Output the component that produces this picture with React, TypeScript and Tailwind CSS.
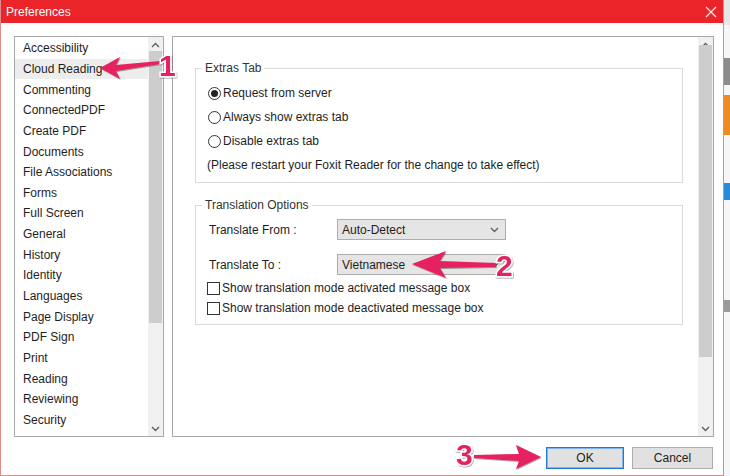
import React from 'react';

const categories = [
  'Accessibility',
  'Cloud Reading',
  'Commenting',
  'ConnectedPDF',
  'Create PDF',
  'Documents',
  'File Associations',
  'Forms',
  'Full Screen',
  'General',
  'History',
  'Identity',
  'Languages',
  'Page Display',
  'PDF Sign',
  'Print',
  'Reading',
  'Reviewing',
  'Security',
];

const PINK = '#e5245f';

function Chevron({ up }: { up?: boolean }) {
  return (
    <svg width="9" height="6" viewBox="0 0 9 6" className="text-[#606060]">
      <path
        d={up ? 'M1 5 L4.5 1.5 L8 5' : 'M1 1 L4.5 4.5 L8 1'}
        fill="none"
        stroke="currentColor"
        strokeWidth="1.4"
      />
    </svg>
  );
}

// vertical scrollbar, thumb sized by flex ratio
function ScrollBar({ thumb, rest }: { thumb: string; rest: string }) {
  return (
    <div className="w-[15px] bg-[#f0f0f0] flex flex-col">
      <div className="h-[15px] flex items-center justify-center">
        <Chevron up />
      </div>
      <div className={`${thumb} bg-[#cdcdcd] mx-[1px]`} />
      <div className={rest} />
      <div className="h-[15px] flex items-center justify-center">
        <Chevron />
      </div>
    </div>
  );
}

function Radio({ checked, label }: { checked?: boolean; label: string }) {
  return (
    <div className="h-[24px] flex items-center gap-[2px]">
      <span className="w-[13px] h-[13px] rounded-full border border-[#333] bg-white flex items-center justify-center">
        {checked && <span className="w-[7px] h-[7px] rounded-full bg-[#222]" />}
      </span>
      <span>{label}</span>
    </div>
  );
}

function Check({ label }: { label: string }) {
  return (
    <div className="h-[20px] flex items-center gap-[2px]">
      <span className="w-[13px] h-[13px] border border-[#333] bg-white" />
      <span>{label}</span>
    </div>
  );
}

function Select({ value }: { value: string }) {
  return (
    <div className="w-[169px] h-[21px] bg-[#e5e5e5] border border-[#adadad] flex items-center justify-between pl-[4px] pr-[6px]">
      <span>{value}</span>
      <Chevron />
    </div>
  );
}

function Annotations() {
  const num = {
    fontFamily: '"Liberation Sans", Arial, sans-serif',
    fontWeight: 700,
    fontSize: 30,
  } as const;
  return (
    <svg className="absolute inset-0 pointer-events-none" width="730" height="476">
      <defs>
        <filter id="sh" x="-20%" y="-20%" width="140%" height="140%">
          <feDropShadow dx="0.6" dy="0.8" stdDeviation="0.7" floodColor="#000" floodOpacity="0.45" />
        </filter>
      </defs>
      <g fill={PINK} filter="url(#sh)">
        <polygon points="100,68 120,57 116,65 160,61 160,64 116,71 120,79" />
        <polygon points="412,264 446,251 440,261 496,263 496,267 440,268 446,278" />
        <polygon points="541,457 516,445 519,454 474,455 474,458 519,461 516,469" />
      </g>
      <g fill={PINK} stroke="#fff" strokeWidth="3" paintOrder="stroke" style={num} filter="url(#sh)">
        <text x="159" y="76">1</text>
        <text x="496" y="276">2</text>
        <text x="456" y="465">3</text>
      </g>
    </svg>
  );
}

export default function App() {
  return (
    <div
      className="relative w-[730px] h-[476px] overflow-hidden flex bg-white text-[12px] text-[#1e1e1e]"
      style={{ fontFamily: '"Liberation Sans", Arial, sans-serif' }}
    >
      {/* dialog window */}
      <div className="w-[724px] h-[476px] flex flex-col border-x border-b border-[#e08a8a] bg-white">
        <div className="h-[23px] bg-[#ea2428] flex items-center justify-between pl-[5px] pr-[6px] text-white">
          <span>Preferences</span>
          <svg width="12" height="12" viewBox="0 0 12 12">
            <path d="M1 1 L11 11 M11 1 L1 11" stroke="#fde3e3" strokeWidth="1.3" />
          </svg>
        </div>

        <div className="flex gap-[8px] pl-[13px] pr-[9px] pt-[13px]">
          {/* category list */}
          <div className="w-[150px] h-[401px] border border-[#a8a8a8] flex">
            <div className="flex-1 flex flex-col pt-px">
              {categories.map((c) => (
                <div
                  key={c}
                  className={`h-[20.65px] flex items-center pl-[8px] ${c === 'Cloud Reading' ? 'bg-[#ededed]' : ''}`}
                >
                  {c}
                </div>
              ))}
            </div>
            <ScrollBar thumb="h-[272px] mt-[-1px]" rest="flex-1" />
          </div>

          {/* settings panel */}
          <div className="flex-1 h-[401px] border border-[#a8a8a8] flex">
            <div className="flex-1 pl-[22px] pr-[15px] pt-[24px]">
              <fieldset className="border border-[#dadada] pl-[12px] pb-[5px] pt-[6px]">
                <legend className="px-[3px] ml-[-6px] leading-[14px] text-[#333]">Extras Tab</legend>
                <Radio checked label="Request from server" />
                <Radio label="Always show extras tab" />
                <Radio label="Disable extras tab" />
                <div className="h-[24px] flex items-center -ml-px">
                  (Please restart your Foxit Reader for the change to take effect)
                </div>
              </fieldset>

              <fieldset className="mt-[15px] border border-[#dadada] pl-[12px] pb-[6px] pt-[7px]">
                <legend className="px-[3px] ml-[-6px] leading-[14px] text-[#333]">Translation Options</legend>
                <div className="flex items-center">
                  <span className="w-[129px] pl-px">Translate From :</span>
                  <Select value="Auto-Detect" />
                </div>
                <div className="flex items-center mt-[14px]">
                  <span className="w-[129px] pl-px">Translate To :</span>
                  <Select value="Vietnamese" />
                </div>
                <div className="mt-[3px] -ml-px">
                  <Check label="Show translation mode activated message box" />
                  <Check label="Show translation mode deactivated message box" />
                </div>
              </fieldset>
            </div>
            <ScrollBar thumb="h-[312px] mt-[-7px]" rest="flex-1" />
          </div>
        </div>

        <div className="flex justify-end gap-[8px] pr-[10px] mt-[10px]">
          <button className="w-[78px] h-[22px] bg-[#e1e1e1] border border-[#1f7ad6] shadow-[inset_0_0_0_1px_#7fb6ee]">
            OK
          </button>
          <button className="w-[81px] h-[22px] bg-[#e1e1e1] border border-[#adadad]">Cancel</button>
        </div>
      </div>

      {/* sliver of the app behind the dialog */}
      <div className="flex-1 flex flex-col bg-[#f6f6f6]">
        <div className="h-[25px] bg-[#e6e6e6]" />
        <div className="h-[33px]" />
        <div className="h-[27px] bg-[#8c8c8c]" />
        <div className="h-[10px]" />
        <div className="h-[40px] bg-[#ee8a22]" />
        <div className="h-[48px]" />
        <div className="h-[17px] bg-[#2a8ad8]" />
        <div className="h-[100px]" />
        <div className="h-[12px] bg-[#9a9a9a]" />
        <div className="flex-1" />
      </div>

      <Annotations />
    </div>
  );
}
